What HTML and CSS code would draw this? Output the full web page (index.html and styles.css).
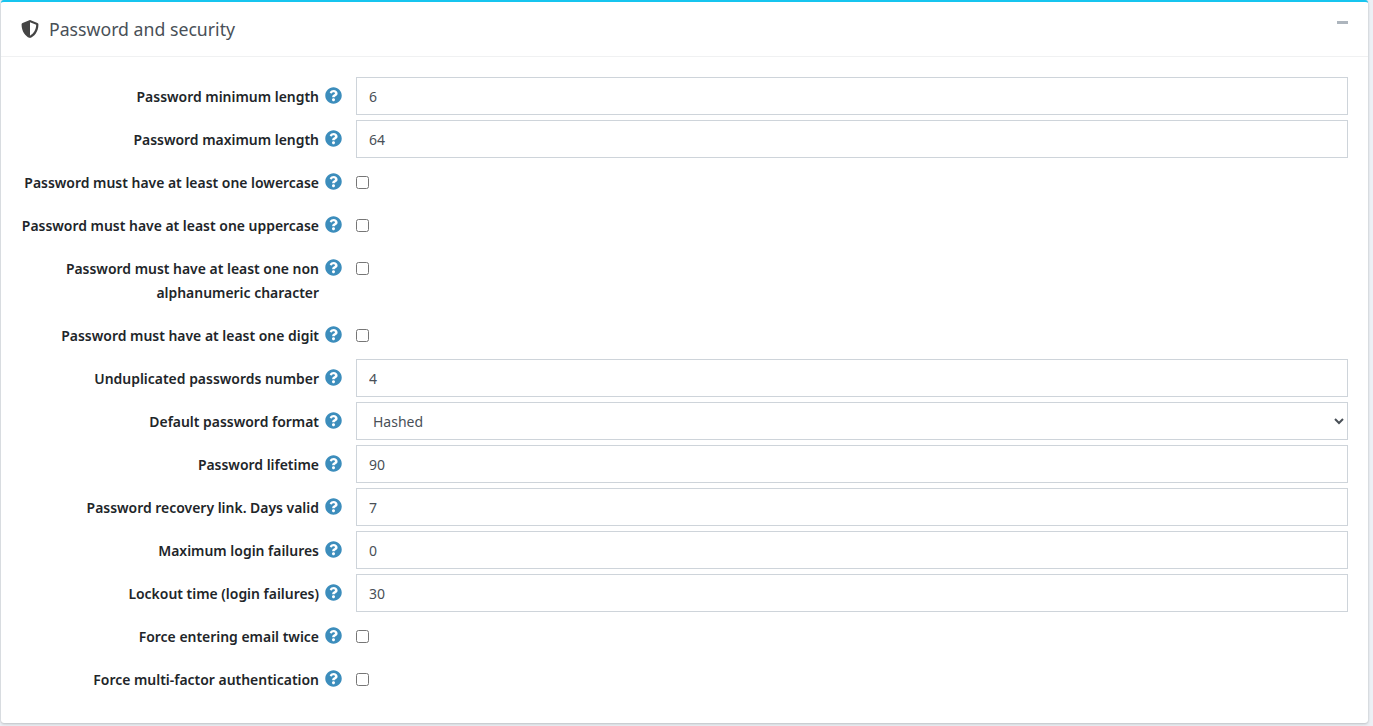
FILE: index.html
```html
<!DOCTYPE html>
<html lang="en">
<head>
<meta charset="utf-8">
<title>Password and security</title>
<link rel="stylesheet" href="styles.css">
</head>
<body>
<svg class="sprite" width="0" height="0" aria-hidden="true">
  <symbol id="q" viewBox="0 0 512 512"><path d="M504 256c0 136.997-111.043 248-248 248S8 392.997 8 256C8 119.083 119.043 8 256 8s248 111.083 248 248zM262.655 90c-54.497 0-89.255 22.957-116.549 63.758-3.536 5.286-2.353 12.415 2.715 16.258l34.699 26.31c5.205 3.947 12.621 3.008 16.665-2.122 17.864-22.658 30.113-35.797 57.303-35.797 20.429 0 45.698 13.148 45.698 32.958 0 14.976-12.363 22.667-32.534 33.976C247.128 238.528 216 254.941 216 296v4c0 6.627 5.373 12 12 12h56c6.627 0 12-5.373 12-12v-1.333c0-28.462 83.186-29.647 83.186-106.667 0-58.002-60.165-102-116.531-102zM256 338c-25.365 0-46 20.635-46 46 0 25.364 20.635 46 46 46s46-20.636 46-46c0-25.365-20.635-46-46-46z"/></symbol>
</svg>
<section class="card">
  <header class="card-header">
    <svg class="shield" viewBox="0 0 512 512"><path d="M466.5 83.7l-192-80a48.15 48.15 0 0 0-36.9 0l-192 80C27.7 91.1 16 108.6 16 128c0 198.5 114.5 335.7 221.5 380.3 11.8 4.9 25.1 4.9 36.9 0C360.1 472.6 496 349.3 496 128c0-19.4-11.7-36.9-29.5-44.3zM256.1 446.3l-.1-381 175.9 73.3c-3.3 151.4-82.1 261.1-175.8 307.7z"/></svg>
    <h1 class="card-title">Password and security</h1>
    <span class="collapse-bar"></span>
  </header>
  <div class="card-body">
    <div class="row"><label class="lbl">Password minimum length</label><svg class="help"><use href="#q"/></svg><input class="field" type="text" value="6"></div>
    <div class="row"><label class="lbl">Password maximum length</label><svg class="help"><use href="#q"/></svg><input class="field" type="text" value="64"></div>
    <div class="row row-check"><label class="lbl">Password must have at least one lowercase</label><svg class="help"><use href="#q"/></svg><input class="check" type="checkbox"></div>
    <div class="row row-check"><label class="lbl">Password must have at least one uppercase</label><svg class="help"><use href="#q"/></svg><input class="check" type="checkbox"></div>
    <div class="row row-check row-tall"><label class="lbl">Password must have at least one non<br>alphanumeric character</label><svg class="help"><use href="#q"/></svg><input class="check" type="checkbox"></div>
    <div class="row row-check"><label class="lbl">Password must have at least one digit</label><svg class="help"><use href="#q"/></svg><input class="check" type="checkbox"></div>
    <div class="row"><label class="lbl">Unduplicated passwords number</label><svg class="help"><use href="#q"/></svg><input class="field" type="text" value="4"></div>
    <div class="row"><label class="lbl">Default password format</label><svg class="help"><use href="#q"/></svg><select class="field"><option>Hashed</option></select></div>
    <div class="row"><label class="lbl">Password lifetime</label><svg class="help"><use href="#q"/></svg><input class="field" type="text" value="90"></div>
    <div class="row"><label class="lbl">Password recovery link. Days valid</label><svg class="help"><use href="#q"/></svg><input class="field" type="text" value="7"></div>
    <div class="row"><label class="lbl">Maximum login failures</label><svg class="help"><use href="#q"/></svg><input class="field" type="text" value="0"></div>
    <div class="row"><label class="lbl">Lockout time (login failures)</label><svg class="help"><use href="#q"/></svg><input class="field" type="text" value="30"></div>
    <div class="row row-check"><label class="lbl">Force entering email twice</label><svg class="help"><use href="#q"/></svg><input class="check" type="checkbox"></div>
    <div class="row row-check"><label class="lbl">Force multi-factor authentication</label><svg class="help"><use href="#q"/></svg><input class="check" type="checkbox"></div>
  </div>
</section>
</body>
</html>
```
FILE: styles.css
```css
html, body { height: 100%; }
body {
  margin: 0;
  background: #ecf0f5;
  font-family: "Noto Sans", sans-serif;
  font-size: 14px;
  color: #212529;
  overflow: hidden;
}
.sprite { position: absolute; }
.card {
  margin-left: 1px;
  width: 1367px;
  height: 723px;
  box-sizing: border-box;
  background: #fff;
  border-top: 2px solid #17c5ef;
  border-radius: 3px;
  box-shadow: 0 0 1px rgba(0,0,0,.125), 0 1px 3px rgba(0,0,0,.2);
}
.card-header {
  height: 55px;
  box-sizing: border-box;
  border-bottom: 1px solid #f0f1f2;
  display: flex;
  align-items: center;
  padding: 0 20px 0 20px;
}
.shield { width: 18px; height: 18px; fill: #444; margin-right: 10px; flex: none; }
.card-title { margin: 0; font-size: 17.7px; font-weight: 400; color: #495057; flex: 1; }
.collapse-bar { width: 11px; height: 3px; background: #adb5bd; align-self: flex-start; margin-top: 19px; }
.card-body { padding-top: 20px; }
.row { display: flex; align-items: flex-start; height: 38px; margin-bottom: 5px; }
.row-tall { height: 62px; }
.lbl {
  width: 318px;
  flex: none;
  text-align: right;
  font-weight: 600;
  font-size: 13.95px;
  line-height: 24px;
  padding-top: 8px;
  box-sizing: border-box;
}
.help { width: 17px; height: 17px; flex: none; fill: #3c8dbc; margin: 10px 14px 0 6px; }
.field {
  flex: none;
  width: 992px;
  height: 38px;
  box-sizing: border-box;
  border: 1px solid #ced4da;
  border-radius: 0;
  background: #fff;
  padding: 6px 12px;
  font: inherit;
  font-weight: 400;
  color: #495057;
}
.check { margin: 13px 0 0 0; width: 13px; height: 13px; }
```
